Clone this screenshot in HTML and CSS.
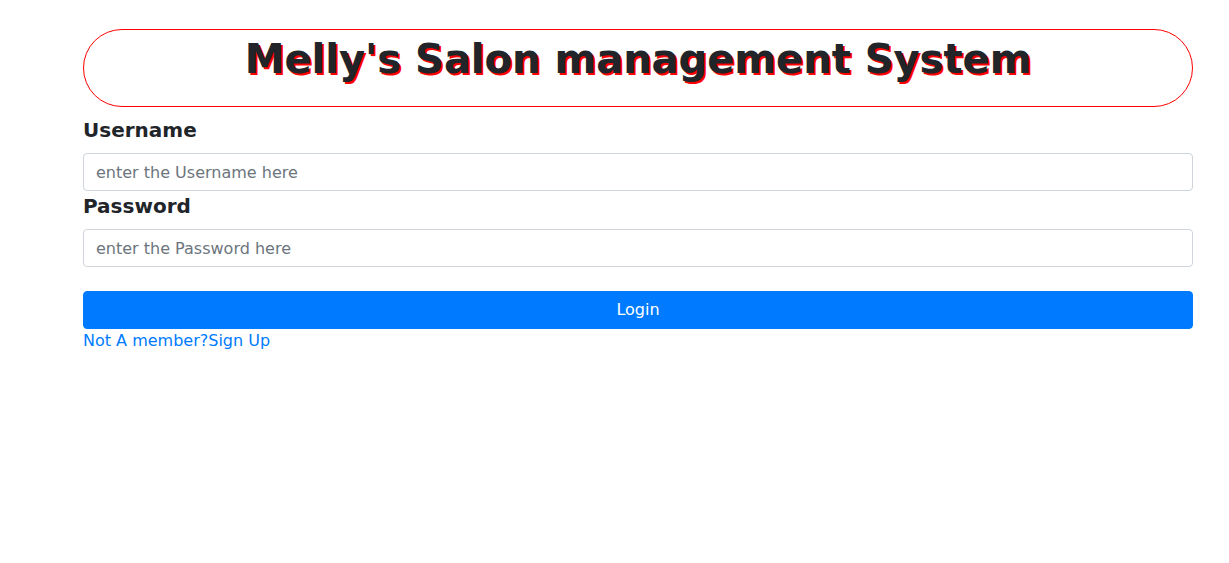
FILE: index.html
```html
<!DOCTYPE html>
<html>
<head>
<meta charset="utf-8">
<link rel="stylesheet" href="styles.css">
</head>
<body>
<div class="page">
  <div class="title-box">
    <h1 class="title">Melly's Salon management System</h1>
  </div>
  <form class="login-form">
    <label class="field-label" for="u">Username</label>
    <input class="field-input" id="u" type="text" placeholder="enter the Username here">
    <label class="field-label" for="p">Password</label>
    <input class="field-input" id="p" type="password" placeholder="enter the Password here">
    <button class="login-btn" type="button">Login</button>
    <a class="signup-link" href="#">Not A member?Sign Up</a>
  </form>
</div>
</body>
</html>
```

FILE: styles.css
```css
* { box-sizing: border-box; }
html, body { margin: 0; padding: 0; background: #fff; }
body {
  font-family: "DejaVu Sans", sans-serif;
  font-size: 16px;
  line-height: 1.5;
  color: #212529;
}
.page {
  width: 1110px;
  margin-left: 83px;
  padding-top: 29px;
}
.title-box {
  border: 1px solid #ff0000;
  border-radius: 40px;
  height: 78px;
  padding-top: 5px;
  text-align: center;
}
.title {
  margin: 0;
  font-size: 40px;
  line-height: 1.2;
  font-weight: bold;
  color: #212529;
  text-shadow: 2px 2px #ff0000;
}
.login-form {
  display: flex;
  flex-direction: column;
  padding-top: 8px;
}
.field-label {
  display: block;
  font-size: 20px;
  line-height: 30px;
  font-weight: bold;
  margin-bottom: 8px;
}
.field-input {
  display: block;
  width: 100%;
  height: 38px;
  padding: 6px 12px;
  font-family: inherit;
  font-size: 16px;
  line-height: 1.5;
  color: #495057;
  border: 1px solid #ced4da;
  border-radius: 4px;
  background: #fff;
}
.field-input::placeholder { color: #6c757d; opacity: 1; }
.login-btn {
  margin-top: 24px;
  height: 38px;
  width: 100%;
  background: #007bff;
  color: #fff;
  border: 1px solid #007bff;
  border-radius: 4px;
  font-family: inherit;
  font-size: 16px;
  line-height: 1.5;
  padding: 6px 12px;
}
.signup-link {
  align-self: flex-start;
  color: #007bff;
  text-decoration: none;
  line-height: 24px;
}
```
